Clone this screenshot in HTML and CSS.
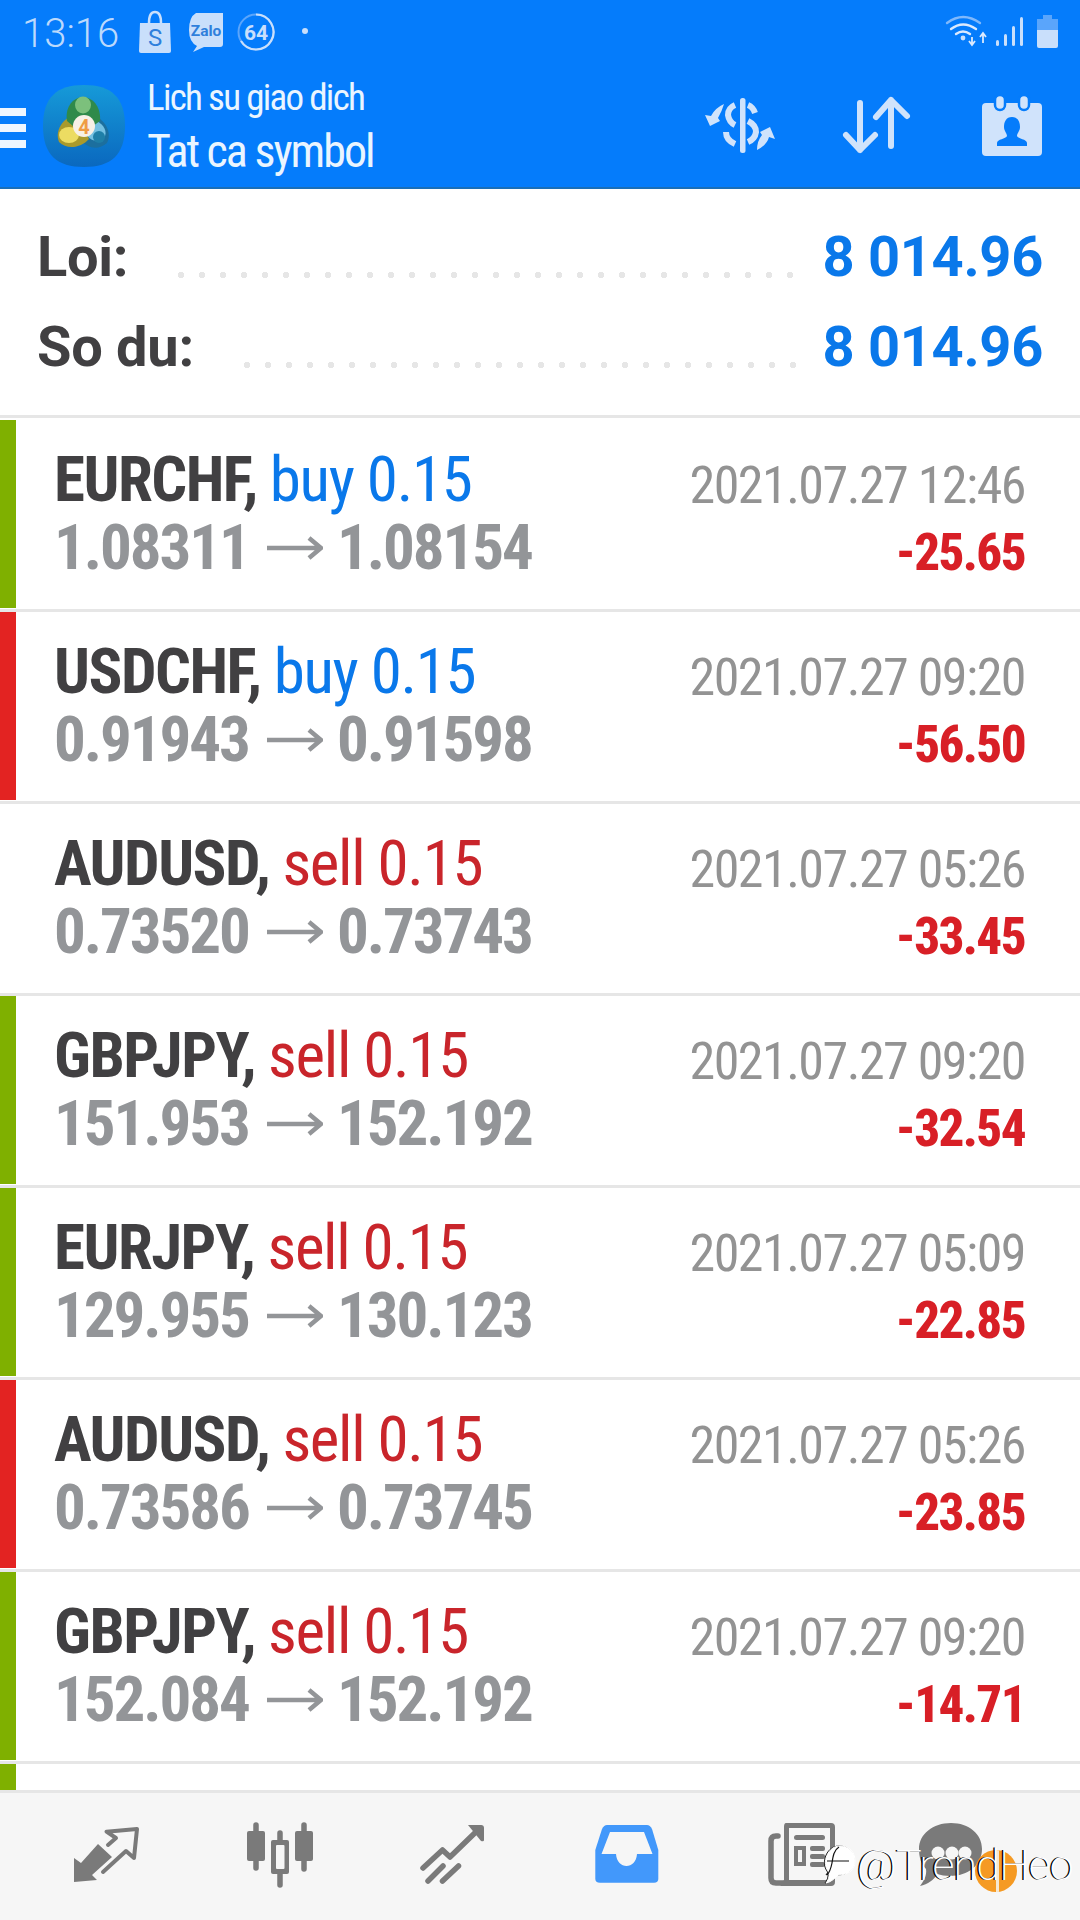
FILE: index.html
```html
<!DOCTYPE html>
<html lang="vi">
<head>
<meta charset="utf-8">
<title>Lich su giao dich</title>
<link rel="stylesheet" href="styles.css">
</head>
<body>
<div class="page">
  <header class="header">
    <div class="status">
      <span class="time">13:16</span>
      <svg class="status-left" viewBox="0 0 200 60">
        <path class="ico-light" d="M10 18H40L41 46Q41 48 39 48H11Q9 48 9 46Z"/>
        <path class="ico-line" d="M19 18Q19 7 25 7Q31 7 31 18"/>
        <text class="shop-s" x="25" y="41">S</text>
        <path class="ico-light" d="M66 8H93V39Q93 42 90 42H74L63 47L67 41Q59 37 59 25Q59 12 66 8Z"/>
        <text class="zalo" x="76" y="31">Zalo</text>
        <circle class="ring-dim" cx="126" cy="27" r="17.5"/>
        <path class="ring" d="M126 9.5A17.5 17.5 0 1 1 111 36"/>
        <text class="num" x="126" y="35">64</text>
        <circle class="ico-light" cx="175" cy="26" r="3"/>
      </svg>
      <svg class="status-right" viewBox="0 0 140 50">
        <path class="wifi-dim" d="M17 18Q33 6 50 18"/>
        <path class="wifi" d="M21 24Q33 15 46 24M26 29Q33 24 40 29"/>
        <circle class="ico-light" cx="33" cy="33" r="2.4"/>
        <path class="wifi-thin" d="M42 32V40M39 36L42 40L45 36M53 38V29M50 32L53 28L56 32"/>
        <rect class="ico-light" x="66" y="35" width="3" height="6" rx="1.5"/>
        <rect class="ico-light" x="74" y="29" width="3" height="12" rx="1.5"/>
        <rect class="ico-light" x="82" y="21" width="3" height="20" rx="1.5"/>
        <rect class="ico-light" x="90" y="12" width="3" height="29" rx="1.5"/>
        <path class="batt-dim" d="M113 10H122V14H128V25H107V14H113Z"/>
        <path class="ico-light" d="M107 25H128V41Q128 43 126 43H109Q107 43 107 41Z"/>
      </svg>
    </div>
    <div class="appbar">
      <div class="burger"><i></i><i></i><i></i></div>
      <svg class="logo" viewBox="0 0 82 82">
        <defs>
          <linearGradient id="sq" x1="0" y1="0" x2="0" y2="1">
            <stop offset="0" stop-color="#169ad8"/>
            <stop offset="1" stop-color="#0a68bf"/>
          </linearGradient>
        </defs>
        <path fill="url(#sq)" d="M41 0C68 0 82 12 82 41C82 70 68 82 41 82C14 82 0 70 0 41C0 12 14 0 41 0Z"/>
        <path fill="#1c6f9e" d="M52 31C63 36 69 48 64 58C55 66 44 63 38 55Z"/>
        <path fill="#74c0e2" d="M54 36C61 40 65 47 61 53C53 58 47 55 44 50Z"/>
        <circle fill="#1f7fa8" cx="56" cy="52" r="6"/>
        <path fill="#a99a2c" d="M28 31C18 36 12 47 16 57C24 65 38 63 46 54L40 42Z"/>
        <ellipse fill="#ecdc62" cx="26" cy="50" rx="10" ry="8"/>
        <path fill="#2f8a4a" d="M40 12C52 13 58 24 57 36L50 41H30L24 36C22 24 28 13 40 12Z"/>
        <ellipse fill="#7cc07c" cx="40" cy="20" rx="8" ry="8.5"/>
        <circle fill="#f7f0e6" cx="41" cy="41" r="11"/>
        <text class="logo-4" x="41" y="48.500">4</text>
      </svg>
      <div class="titles">
        <div class="title-sm">Lich su giao dich</div>
        <div class="title-lg">Tat ca symbol</div>
      </div>
      <svg class="act-dollar" viewBox="0 0 100 80">
        <rect class="ico-bar" x="50" y="13" width="5.5" height="55" rx="2.5"/>
        <path class="ico-s" d="M45 20Q38 23 38 30Q39 37 45 40M58 20Q63 22 65 28M58 36Q66 40 66 47Q65 54 58 57M36 47Q36 55 45 59"/>
        <path class="ico-bar" d="M34 19Q32 26 28 33L30 36L20 41L15 30L21 31Q25 23 34 19Z"/>
        <path class="ico-bar" d="M67 65Q67 56 72 50L70 47L80 42L85 54L79 52Q77 60 67 65Z"/>
      </svg>
      <svg class="act-sort" viewBox="0 0 72 62">
        <path class="ico-arrow" d="M20 9V56M6 41L20 56L35 41M51 6V52M36 23L51 6L67 22"/>
      </svg>
      <svg class="act-contact" viewBox="0 0 60 62">
        <rect class="ico-fill" x="0" y="9" width="60" height="53" rx="4"/>
        <rect class="ico-ring" x="13" y="1" width="10" height="15" rx="5"/>
        <rect class="ico-ring" x="37" y="1" width="10" height="15" rx="5"/>
        <path class="ico-head" d="M30 23C36 23 38 28 38 33C38 37 35 39 35 42C36 45 45 45 45 49V52H15V49C15 45 24 45 25 42C25 39 22 37 22 33C22 28 24 23 30 23Z"/>
      </svg>
    </div>
  </header>

  <section class="summary">
    <div class="sum-row"><span>Loi:</span><i class="dots"></i><b>8 014.96</b></div>
    <div class="sum-row"><span>So du:</span><i class="dots"></i><b>8 014.96</b></div>
  </section>

  <main class="list">
    <article class="row">
      <div class="bar green"></div>
      <div class="left">
        <div class="sym">EURCHF, <span class="buy">buy 0.15</span></div>
        <div class="prices"><span class="p">1.08311</span><svg class="arrow" viewBox="0 0 56 24"><path d="M0 12H54M42 2L54 12L42 22"/></svg><span class="p">1.08154</span></div>
      </div>
      <div class="right"><div class="date">2021.07.27 12:46</div><div class="pnl">-25.65</div></div>
    </article>
    <article class="row">
      <div class="bar red"></div>
      <div class="left">
        <div class="sym">USDCHF, <span class="buy">buy 0.15</span></div>
        <div class="prices"><span class="p">0.91943</span><svg class="arrow" viewBox="0 0 56 24"><path d="M0 12H54M42 2L54 12L42 22"/></svg><span class="p">0.91598</span></div>
      </div>
      <div class="right"><div class="date">2021.07.27 09:20</div><div class="pnl">-56.50</div></div>
    </article>
    <article class="row">
      <div class="bar"></div>
      <div class="left">
        <div class="sym">AUDUSD, <span class="sell">sell 0.15</span></div>
        <div class="prices"><span class="p">0.73520</span><svg class="arrow" viewBox="0 0 56 24"><path d="M0 12H54M42 2L54 12L42 22"/></svg><span class="p">0.73743</span></div>
      </div>
      <div class="right"><div class="date">2021.07.27 05:26</div><div class="pnl">-33.45</div></div>
    </article>
    <article class="row">
      <div class="bar green"></div>
      <div class="left">
        <div class="sym">GBPJPY, <span class="sell">sell 0.15</span></div>
        <div class="prices"><span class="p">151.953</span><svg class="arrow" viewBox="0 0 56 24"><path d="M0 12H54M42 2L54 12L42 22"/></svg><span class="p">152.192</span></div>
      </div>
      <div class="right"><div class="date">2021.07.27 09:20</div><div class="pnl">-32.54</div></div>
    </article>
    <article class="row">
      <div class="bar green"></div>
      <div class="left">
        <div class="sym">EURJPY, <span class="sell">sell 0.15</span></div>
        <div class="prices"><span class="p">129.955</span><svg class="arrow" viewBox="0 0 56 24"><path d="M0 12H54M42 2L54 12L42 22"/></svg><span class="p">130.123</span></div>
      </div>
      <div class="right"><div class="date">2021.07.27 05:09</div><div class="pnl">-22.85</div></div>
    </article>
    <article class="row">
      <div class="bar red"></div>
      <div class="left">
        <div class="sym">AUDUSD, <span class="sell">sell 0.15</span></div>
        <div class="prices"><span class="p">0.73586</span><svg class="arrow" viewBox="0 0 56 24"><path d="M0 12H54M42 2L54 12L42 22"/></svg><span class="p">0.73745</span></div>
      </div>
      <div class="right"><div class="date">2021.07.27 05:26</div><div class="pnl">-23.85</div></div>
    </article>
    <article class="row">
      <div class="bar green"></div>
      <div class="left">
        <div class="sym">GBPJPY, <span class="sell">sell 0.15</span></div>
        <div class="prices"><span class="p">152.084</span><svg class="arrow" viewBox="0 0 56 24"><path d="M0 12H54M42 2L54 12L42 22"/></svg><span class="p">152.192</span></div>
      </div>
      <div class="right"><div class="date">2021.07.27 09:20</div><div class="pnl">-14.71</div></div>
    </article>
    <article class="row">
      <div class="bar green"></div>
    </article>
  </main>

  <nav class="nav">
    <svg class="nav-ico" viewBox="0 0 70 70">
      <path class="grey-fill" d="M3 62V38L10 43L27 24L41 37L21 55L26 60Z"/>
      <path class="grey-line thin" d="M37 25L45 18L35.5 11.7L66 9L63 38L55 31L32 52"/>
    </svg>
    <svg class="nav-ico" viewBox="0 0 70 70">
      <path class="grey-line" d="M11 5V48M35 13V65M59 5V49"/>
      <rect class="grey-fill" x="2" y="11" width="18" height="30" rx="2"/>
      <rect class="grey-fill" x="26" y="20" width="18" height="34" rx="2"/>
      <rect class="nav-hole" x="31" y="25" width="8.5" height="24" rx="1"/>
      <rect class="grey-fill" x="50" y="11" width="18" height="30" rx="2"/>
    </svg>
    <svg class="nav-ico" viewBox="0 0 70 70">
      <path class="grey-line" d="M5 48L24.5 30L32 37L62 8M10 61L25 46M24.5 61L40.5 46"/>
      <path class="grey-fill" d="M50 5H63Q66 5 66 8V20Q66 22 63 21Z"/>
    </svg>
    <svg class="nav-ico" viewBox="0 0 70 70">
      <path class="blue-fill" d="M15 5H55Q58 5 60 9L66.3 30V59Q66.3 62.7 62 62.7H8Q3.3 62.7 3.3 59V30L10 9Q12 5 15 5Z"/>
      <path class="nav-hole" d="M18 12H52L60.5 34H45C44 50 25 50 24 34H9.5Z"/>
    </svg>
    <svg class="nav-ico nav-doc" viewBox="0 0 70 70">
      <path class="grey-line" d="M11 16H9Q4 16 4 21V58Q4 63 9 63H18"/>
      <path class="grey-fill" d="M19 3H64Q68 3 68 7V62Q68 66 64 66H14Q12 66 17 60V7Q17 3 19 3ZM22 8V60H63V8Z"/>
      <rect class="grey-fill" x="27" y="15" width="31" height="5" rx="2.5"/>
      <path class="grey-fill" d="M27 26H39V46H27ZM31 30V42H35V30Z"/>
      <rect class="grey-fill" x="43" y="26" width="15" height="5" rx="2"/>
      <rect class="grey-fill" x="43" y="34" width="15" height="5" rx="2"/>
      <rect class="grey-fill" x="43" y="42" width="15" height="5" rx="2"/>
    </svg>
    <svg class="nav-ico nav-chat" viewBox="0 0 70 70">
      <path class="grey-fill" d="M35 3C53 3 66 14 66 29C66 45 52 56 34 56C29 56 25 55 21 54C18 60 12 64 4 66C8 61 11 55 10 49C5 44 3 37 3 29C3 14 17 3 35 3Z"/>
      <circle class="nav-hole" cx="22" cy="33" r="6.5"/>
      <circle class="nav-hole" cx="36" cy="33" r="6.5"/>
      <circle class="nav-hole" cx="49" cy="33" r="6.5"/>
    </svg>
  </nav>

  <div class="watermark">
    <svg class="wm-logo" viewBox="0 0 34 40">
      <path class="wm-bubble" d="M17 2C27 2 32 9 32 17C32 27 24 31 15 31C11 35 8 38 3 39C6 35 7 31 5 27C2 23 2 18 3 14C5 7 10 2 17 2Z"/>
      <path class="wm-f" d="M16 3C11 6 10 12 9 19C8 24 7 28 4 31M4 17H26"/>
    </svg>
    <span class="wm-text">@TrendHeo</span>
    <div class="wm-coin"><i></i></div>
  </div>
</div>
</body>
</html>
```
FILE: styles.css
```css
* { box-sizing: border-box; }
html, body { margin: 0; padding: 0; }
body { font-family: Roboto, "Liberation Sans", sans-serif; background: #fff; }
.page { position: relative; width: 1080px; height: 1920px; overflow: hidden; display: flex; flex-direction: column; }

/* header */
.header { height: 189px; background: #057cfb; border-bottom: 2px solid #1a6fb8; flex: none; }
.status { height: 64px; display: flex; align-items: flex-start; position: relative; }
.time { font-size: 40px; font-weight: 300; font-stretch: 92%; line-height: 47px; margin: 10px 0 0 22px; width: 108px; color: #bcd9fc; }
.status-left { width: 200px; height: 60px; margin-top: 5px; }
.status-right { width: 140px; height: 50px; margin: 5px 10px 0 auto; }
.ico-light { fill: #c9dffb; }
.ico-line { fill: none; stroke: #c9dffb; stroke-width: 2.5; }
.shop-s { font-size: 24px; fill: #2f7fdc; text-anchor: middle; }
.zalo { font-size: 15.5px; font-weight: 700; fill: #2f7fdc; text-anchor: middle; }
.ring-dim { fill: none; stroke: #5ba5fb; stroke-width: 2; }
.ring { fill: none; stroke: #c9dffb; stroke-width: 2.2; }
.num { font-size: 21px; font-weight: 700; fill: #c9dffb; text-anchor: middle; }
.wifi-dim { fill: none; stroke: #7fb8fb; stroke-width: 2.4; stroke-linecap: round; }
.wifi { fill: none; stroke: #dbe9fd; stroke-width: 2.4; stroke-linecap: round; }
.wifi-thin { fill: none; stroke: #dbe9fd; stroke-width: 1.8; }
.batt-dim { fill: #5aa5fb; }

.appbar { height: 123px; display: flex; align-items: flex-start; }
.burger { width: 26px; margin-top: 44px; flex: none; display: flex; flex-direction: column; gap: 8px; }
.burger i { display: block; height: 8px; background: #eef6ff; }
.logo { width: 82px; height: 82px; margin: 21px 0 0 17px; flex: none; }
.logo-4 { font-size: 20px; font-weight: 700; fill: #ef9c45; text-anchor: middle; }
.titles { margin-left: 22px; color: #eaf5ff; font-stretch: 75%; width: 543px; flex: none; }
.title-sm { font-size: 37px; line-height: 44px; margin-top: 12px; letter-spacing: -1.7px; }
.title-lg { font-size: 46px; line-height: 54px; margin-top: 4px; letter-spacing: -2px; }
.act-dollar { width: 100px; height: 80px; margin: 21px 0 0 0; flex: none; }
.ico-bar { fill: #d0e3fb; }
.ico-s { fill: none; stroke: #d0e3fb; stroke-width: 6; }
.act-sort { width: 72px; height: 62px; margin: 30px 0 0 50px; flex: none; }
.ico-arrow { fill: none; stroke: #d0e3fb; stroke-width: 6; stroke-linecap: round; stroke-linejoin: round; }
.act-contact { width: 60px; height: 62px; margin: 30px 0 0 70px; flex: none; }
.ico-fill { fill: #d0e3fb; }
.ico-ring { fill: #d0e3fb; stroke: #057cfb; stroke-width: 2.5; }
.ico-head { fill: #057cfb; }

/* summary */
.summary { height: 229px; flex: none; padding: 23px 37px 0; border-bottom: 3px solid #e6e6e6; margin-bottom: 2px; }
.sum-row { display: flex; height: 90px; line-height: 90px; font-size: 56px; font-weight: 700; color: #414042; letter-spacing: -.3px; }
.sum-row b { color: #0a78ea; font-weight: 700; }
.dots { flex: 1; align-self: flex-end; height: 6px; margin: 0 18px 24px 50px; background-image: radial-gradient(circle at 3px 3px, #e6e6e6 3px, transparent 3.4px); background-size: 21px 6px; background-repeat: repeat-x; }

/* rows */
.list { height: 1370px; flex: none; overflow: hidden; }
.row { height: 192px; display: flex; border-bottom: 3px solid #e6e6e6; }
.bar { width: 16px; height: 188px; flex: none; }
.green { background: #7fb000; }
.red { background: #e32322; }
.left { width: 600px; margin-left: 38px; padding-top: 26px; flex: none; }
.sym { font-size: 63px; font-weight: 700; font-stretch: 75%; line-height: 68px; letter-spacing: -1.5px; color: #414042; white-space: nowrap; }
.buy, .sell { font-weight: 400; letter-spacing: -1.3px; }
.buy { color: #0a78ea; }
.sell { color: #c9252b; }
.prices { display: flex; align-items: center; height: 68px; font-size: 63px; font-weight: 700; font-stretch: 75%; line-height: 68px; color: #939598; letter-spacing: -2.1px; }
.p { width: 213px; white-space: nowrap; }
.arrow { width: 56px; height: 24px; margin-right: 14px; flex: none; }
.arrow path { fill: none; stroke: #939598; stroke-width: 4.5; }
.right { margin-left: auto; padding: 32px 55px 0 0; text-align: right; font-stretch: 75%; white-space: nowrap; }
.date { font-size: 52px; line-height: 67px; color: #939393; letter-spacing: -1.5px; }
.pnl { font-size: 51px; line-height: 67px; font-weight: 800; color: #d81f26; letter-spacing: -1.6px; }

/* nav */
.nav { flex: 1; background: #f6f6f6; border-top: 3px solid #e6e6e6; padding: 27px 0 0 71px; display: flex; gap: 103.5px; align-items: flex-start; }
.nav-ico { width: 70px; height: 70px; flex: none; }
.nav-doc { margin-left: 2px; }
.nav-chat { margin-left: -25px; }
.grey-fill { fill: #7a7a7a; }
.grey-line { fill: none; stroke: #7a7a7a; stroke-width: 5.5; stroke-linecap: round; stroke-linejoin: round; }
.grey-line.thin { stroke-width: 4; }
.nav-hole { fill: #f6f6f6; }
.blue-fill { fill: #4298fb; }

/* watermark over nav */
.watermark { position: absolute; left: 823px; top: 1840px; width: 250px; height: 60px; }
.wm-logo { position: absolute; left: 0; top: 4px; width: 34px; height: 40px; filter: drop-shadow(-1px 0 0 #222); }
.wm-bubble { fill: #fff; stroke: #fff; stroke-width: 1; }
.wm-f { fill: none; stroke: #111; stroke-width: 1.2; }
.wm-coin { position: absolute; left: 152px; top: 10px; width: 42px; height: 42px; border-radius: 50%; background: #f59a23; overflow: hidden; }
.wm-coin i { position: absolute; left: 21px; top: 0; width: 3px; height: 42px; background: #f6e8d2; }
.wm-text { position: absolute; z-index: 1; left: 34px; top: 0; font-size: 43px; line-height: 50px; font-weight: 200; color: #fff; text-shadow: -1.5px 0 0 #000; white-space: nowrap; letter-spacing: -.8px; }
```
